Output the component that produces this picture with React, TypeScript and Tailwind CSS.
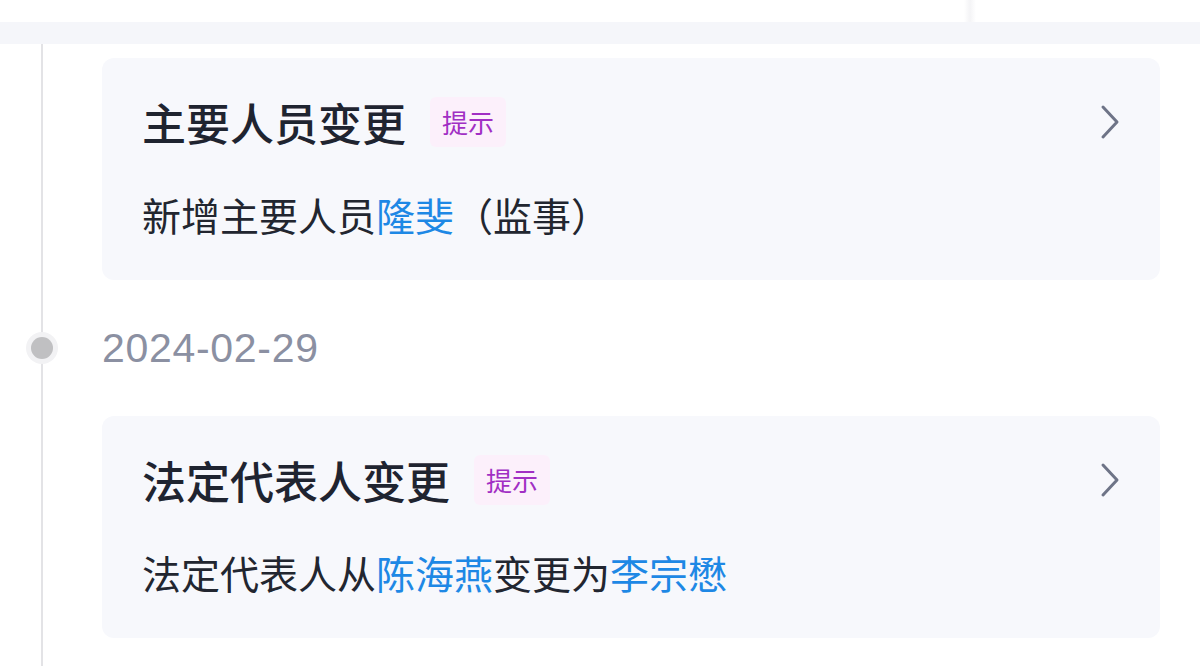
const FONT = "font-['PingFang_SC','Noto_Sans_CJK_SC','Noto_Sans',sans-serif]";

interface Segment {
  text: string;
  link?: boolean;
}

interface ChangeRecord {
  title: string;
  tag: string;
  detail: Segment[];
}

const records: { date?: string; item: ChangeRecord }[] = [
  {
    item: {
      title: '主要人员变更',
      tag: '提示',
      detail: [{ text: '新增主要人员' }, { text: '隆斐', link: true }, { text: '（监事）' }],
    },
  },
  {
    date: '2024-02-29',
    item: {
      title: '法定代表人变更',
      tag: '提示',
      detail: [
        { text: '法定代表人从' },
        { text: '陈海燕', link: true },
        { text: '变更为' },
        { text: '李宗懋', link: true },
      ],
    },
  },
];

function Chevron() {
  return (
    <svg width="20" height="36" viewBox="0 0 20 36" fill="none" className="shrink-0">
      <path d="M3 3 L17 18 L3 33" stroke="#6e7487" strokeWidth="3" strokeLinecap="round" strokeLinejoin="round" />
    </svg>
  );
}

function ChangeCard({ record }: { record: ChangeRecord }) {
  return (
    <div className="rounded-[12px] bg-[#f7f8fc] pl-[40px] pr-[40px] pt-[39px] pb-[41px]">
      {/* 标题行 */}
      <div className="flex h-[50px] items-center justify-between">
        <div className="flex items-center gap-[24px]">
          <span className="text-[44px] leading-[50px] font-medium text-[#1f2430]">{record.title}</span>
          <span className="flex h-[50px] items-center rounded-[6px] bg-[#fcf0fb] px-[12px] text-[26px] leading-none text-[#a12fc4]">
            {record.tag}
          </span>
        </div>
        <Chevron />
      </div>
      {/* 变更详情 */}
      <p className="mt-[42px] text-[39px] leading-[50px] text-[#222630]">
        {record.detail.map((seg, i) => (
          <span key={i} className={seg.link ? 'text-[#1e88e5]' : undefined}>
            {seg.text}
          </span>
        ))}
      </p>
    </div>
  );
}

export default function App() {
  return (
    <div className={`${FONT} h-[666px] w-[1200px] overflow-hidden bg-white`}>
      {/* 顶部残留卡片 */}
      <div className="relative h-[22px] bg-white">
        <div className="absolute left-[964px] top-0 h-[22px] w-[12px] bg-gradient-to-r from-white via-[#f4f4f6] to-white" />
      </div>
      <div className="h-[22px] bg-[#f5f6fa]" />

      {/* 时间线 */}
      <div className="relative flex flex-col pl-[102px] pr-[40px] pt-[14px]">
        <div className="absolute left-[41px] top-0 h-[700px] w-[2px] bg-[#e3e3e6]" />
        {records.map((r, i) => (
          <div key={i} className="flex flex-col">
            {r.date && (
              <div className="relative mt-[44px] flex h-[48px] items-center">
                <div className="absolute left-[-76px] flex h-[32px] w-[32px] items-center justify-center rounded-full bg-[#f2f2f4]">
                  <div className="h-[22px] w-[22px] rounded-full bg-[#c0c0c2]" />
                </div>
                <span className="font-['Liberation_Sans',sans-serif] text-[41px] leading-[48px] tracking-[0.7px] text-[#8b90a2]">
                  {r.date}
                </span>
              </div>
            )}
            <div className={r.date ? 'mt-[44px]' : ''}>
              <ChangeCard record={r.item} />
            </div>
          </div>
        ))}
      </div>
    </div>
  );
}
